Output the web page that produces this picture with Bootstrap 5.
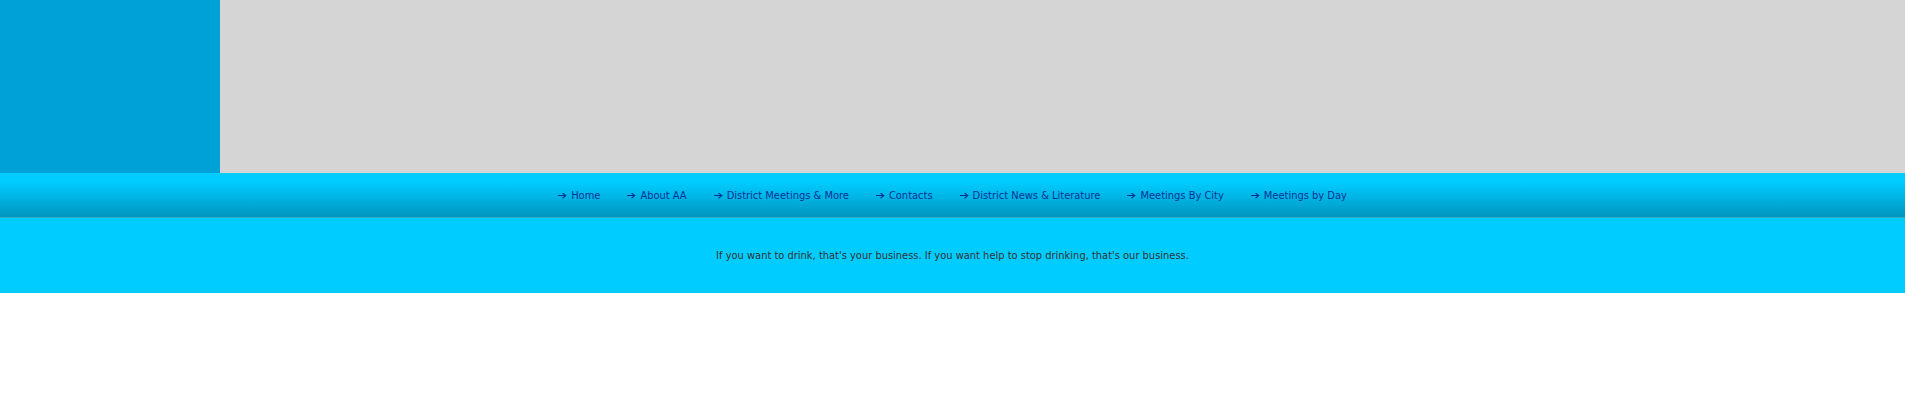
<!DOCTYPE html>
<html lang="en">
<head>
<meta charset="utf-8">
<meta name="viewport" content="width=device-width, initial-scale=1">
<title>District Meetings</title>
<link href="https://cdn.jsdelivr.net/npm/bootstrap@5.3.0/dist/css/bootstrap.min.css" rel="stylesheet">
<style>
body { font-family: Tahoma, "DejaVu Sans Condensed", sans-serif; font-size: 11px; line-height: 16px; color: #333; background: #fff; }
.masthead { background: #d5d5d5; }
.masthead-logo { width: 220px; height: 173px; background: #00a1d7; }
.site-nav { background: linear-gradient(#0cf 0, #0cf 20%, #0096c0 100%); border-bottom: 1px solid #33abcf; padding: 15px 0 13px; gap: 8px 27px; }
.site-nav a { color: #039; gap: 4px; }
.slogan { background: #0cf; padding: 30px 0 29px; }
</style>
</head>
<body>
<header class="masthead"><div class="masthead-logo"></div></header>
<nav class="site-nav d-flex flex-wrap justify-content-center" aria-label="Main">
<svg class="d-none" aria-hidden="true"><symbol id="arrow" viewBox="0 0 9 6"><path d="M0 2.5h8M4.5 0L7.8 2.5L4.5 5.2" fill="none" stroke="#039" stroke-width="1.1"/></symbol></svg>
<a href="#" class="d-flex align-items-center text-decoration-none"><svg width="9" height="6" aria-hidden="true"><use href="#arrow"/></svg>Home</a>
<a href="#" class="d-flex align-items-center text-decoration-none"><svg width="9" height="6" aria-hidden="true"><use href="#arrow"/></svg>About AA</a>
<a href="#" class="d-flex align-items-center text-decoration-none"><svg width="9" height="6" aria-hidden="true"><use href="#arrow"/></svg>District Meetings &amp; More</a>
<a href="#" class="d-flex align-items-center text-decoration-none"><svg width="9" height="6" aria-hidden="true"><use href="#arrow"/></svg>Contacts</a>
<a href="#" class="d-flex align-items-center text-decoration-none"><svg width="9" height="6" aria-hidden="true"><use href="#arrow"/></svg>District News &amp; Literature</a>
<a href="#" class="d-flex align-items-center text-decoration-none"><svg width="9" height="6" aria-hidden="true"><use href="#arrow"/></svg>Meetings By City</a>
<a href="#" class="d-flex align-items-center text-decoration-none"><svg width="9" height="6" aria-hidden="true"><use href="#arrow"/></svg>Meetings by Day</a>
</nav>
<footer class="slogan text-center">If you want to drink, that's your business. If you want help to stop drinking, that's our business.</footer>
<script src="https://cdn.jsdelivr.net/npm/bootstrap@5.3.0/dist/js/bootstrap.bundle.min.js"></script>
</body>
</html>
